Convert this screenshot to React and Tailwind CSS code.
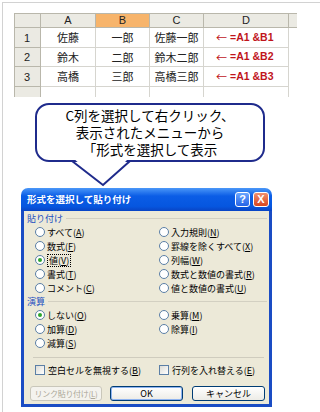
const jp = "font-['Noto_Sans_CJK_JP',sans-serif]";

function Acc({ text, k }) {
  return (
    <>
      {text}(<span className="underline">{k}</span>)
    </>
  );
}

function Radio({ text, k, checked, focus }) {
  return (
    <div className="flex items-center">
      <span className="flex h-[10px] w-[10px] items-center justify-center rounded-full border border-[#5b7fa6] bg-white">
        {checked && <span className="h-[4px] w-[4px] rounded-full bg-[#2ea52e]" />}
      </span>
      <span
        className={
          "ml-[2px] whitespace-nowrap text-[9px] leading-[11px] text-black " +
          (focus ? "border border-dotted border-black px-px" : "")
        }
      >
        <Acc text={text} k={k} />
      </span>
    </div>
  );
}

function Check({ text, k }) {
  return (
    <div className="flex items-center">
      <span className="h-[10px] w-[10px] border border-[#5b7fa6] bg-[linear-gradient(135deg,#dcdcd6,#ffffff)]" />
      <span className="ml-[3px] whitespace-nowrap text-[9px] leading-[11px] text-black">
        <Acc text={text} k={k} />
      </span>
    </div>
  );
}

function GroupLabel({ children }) {
  return (
    <div className="flex items-center pl-[3px]">
      <span className="text-[9px] leading-[11px] text-[#1c4fc0]">{children}</span>
      <div className="ml-[3px] mr-[2px] h-px flex-1 bg-[#d3d0c2]" />
    </div>
  );
}

const rows = [
  ["1", "佐藤", "一郎", "佐藤一郎", "B1"],
  ["2", "鈴木", "二郎", "鈴木二郎", "B2"],
  ["3", "高橋", "三郎", "高橋三郎", "B3"],
];

function Sheet() {
  const head = "flex items-center justify-center border-b border-r border-[#b9b7ab] bg-[#ebeae3] text-[11px] text-[#222] font-['Liberation_Sans',sans-serif]";
  const cell = "flex items-center justify-center border-b border-r border-[#d6d5cf] bg-white text-[11px] text-[#222]";
  return (
    <div className="ml-[11px] mt-[10px] grid h-[84px] w-[283px] grid-cols-[26px_55px_54px_54px_85px_9px] grid-rows-[14px_20px_19px_20px_11px] overflow-hidden border-l border-t border-[#b9b7ab]">
      <div className={head} />
      <div className={head}>A</div>
      <div className={head + " !bg-[#f7b46b]"}>B</div>
      <div className={head}>C</div>
      <div className={head}>D</div>
      <div className={head} />
      {rows.map((r) => (
        <>
          <div key={r[0] + "h"} className={head + " !items-end !justify-start pb-[1px] pl-[9px]"}>{r[0]}</div>
          <div key={r[0] + "a"} className={cell}>{r[1]}</div>
          <div key={r[0] + "b"} className={cell}>{r[2]}</div>
          <div key={r[0] + "c"} className={cell}>{r[3]}</div>
          <div key={r[0] + "d"} className={cell + " !justify-start pl-[12px] text-[#c0141b]"}>
            <span className="text-[11px]">←</span>
            <span className="ml-[3px] font-['Liberation_Sans',sans-serif] text-[10.5px] font-bold">=A1 &amp;{r[4]}</span>
          </div>
          <div key={r[0] + "e"} className="bg-white" />
        </>
      ))}
      <div className={head + " !border-b-0"} />
      <div className={cell + " !border-b-0"} />
      <div className={cell + " !border-b-0"} />
      <div className={cell + " !border-b-0"} />
      <div className={cell + " !border-b-0"} />
      <div className="bg-white" />
    </div>
  );
}

function Bubble() {
  return (
    <div className="relative ml-[32px] mt-[6px] flex h-[59px] w-[230px] flex-col items-center justify-center rounded-[14px] border-2 border-[#1f2b8c] bg-white text-[13.5px] text-black">
      <div className="h-[17px] leading-[17px]">C列を選択して右クリック、</div>
      <div className="h-[17px] leading-[17px]">表示されたメニューから</div>
      <div className="h-[17px] leading-[17px]">「形式を選択して表示</div>
      <svg className="absolute left-[33px] top-[53px]" width="62" height="30" viewBox="0 0 62 30">
        <polygon points="3,0 59,0 33,26" fill="#ffffff" />
        <polyline points="2,3 33,27 60,3" fill="none" stroke="#1f2b8c" strokeWidth="2" strokeLinejoin="miter" />
      </svg>
    </div>
  );
}

function Dialog() {
  const btn = "flex h-[15px] items-center justify-center whitespace-nowrap rounded-[3px] leading-none";
  return (
    <div className="ml-[18px] mt-[26px] w-[251px]">
      <div className="flex h-[23px] items-center rounded-t-[7px] bg-[linear-gradient(to_bottom,#4a97f8,#0b5de6_35%,#0656df_80%,#0944c4)] pl-[6px] pr-[3px]">
        <span className="text-[9.5px] font-bold text-white">形式を選択して貼り付け</span>
        <div className="ml-auto flex gap-[3px]">
          <span className="flex h-[15px] w-[15px] items-center justify-center rounded-[3px] border border-white bg-[linear-gradient(to_bottom,#6aa6ff,#2563e6)] font-['Liberation_Sans',sans-serif] text-[11px] font-bold leading-none text-white">?</span>
          <span className="flex h-[15px] w-[16px] items-center justify-center rounded-[3px] border border-white bg-[linear-gradient(to_bottom,#f09070,#d8451e)] font-['Liberation_Sans',sans-serif] text-[11px] font-bold leading-none text-white">X</span>
        </div>
      </div>
      <div className="border-x-[3px] border-b-[3px] border-[#1a4cc4] bg-[#ece9d8] pb-[3px]">
        <div className="flex h-[14px] flex-col justify-center">
          <GroupLabel>貼り付け</GroupLabel>
        </div>
        <div className="grid auto-rows-[14px] grid-cols-[124px_1fr] pl-[11px]">
          <Radio text="すべて" k="A" />
          <Radio text="入力規則" k="N" />
          <Radio text="数式" k="F" />
          <Radio text="罫線を除くすべて" k="X" />
          <Radio text="値" k="V" checked focus />
          <Radio text="列幅" k="W" />
          <Radio text="書式" k="T" />
          <Radio text="数式と数値の書式" k="R" />
          <Radio text="コメント" k="C" />
          <Radio text="値と数値の書式" k="U" />
        </div>
        <div className="flex h-[13px] flex-col justify-center">
          <GroupLabel>演算</GroupLabel>
        </div>
        <div className="grid auto-rows-[14px] grid-cols-[124px_1fr] pl-[11px]">
          <Radio text="しない" k="O" checked />
          <Radio text="乗算" k="M" />
          <Radio text="加算" k="D" />
          <Radio text="除算" k="I" />
          <Radio text="減算" k="S" />
          <div />
        </div>
        <div className="ml-[9px] mt-[7px] h-px w-[231px] bg-[#cfccbe]" />
        <div className="mt-[5px] grid h-[14px] grid-cols-[124px_1fr] items-center pl-[11px]">
          <Check text="空白セルを無視する" k="B" />
          <Check text="行列を入れ替える" k="E" />
        </div>
        <div className="mt-[9px] flex pl-[6px]">
          <span className={btn + " w-[72px] border border-[#c9c7ba] bg-[#f4f3ee] text-[8px] tracking-[-0.3px] text-[#aca899]"}>
            <Acc text="リンク貼り付け" k="L" />
          </span>
          <span className={btn + " ml-[8px] w-[73px] border border-[#003c74] bg-[linear-gradient(to_bottom,#ffffff,#ecebe6)] text-[9px] text-black shadow-[inset_0_0_0_1px_#8fb4f0]"}>
            OK
          </span>
          <span className={btn + " ml-[9px] w-[73px] border border-[#003c74] bg-[linear-gradient(to_bottom,#ffffff,#ecebe6)] text-[9px] text-black"}>
            キャンセル
          </span>
        </div>
      </div>
    </div>
  );
}

export default function App() {
  return (
    <div className={"h-[412px] w-[320px] overflow-hidden bg-white pl-[2px] pt-[2px] " + jp}>
      <div className="h-[410px] border-l border-t border-[#d2d2d2]">
        <Sheet />
        <Bubble />
        <Dialog />
      </div>
    </div>
  );
}
